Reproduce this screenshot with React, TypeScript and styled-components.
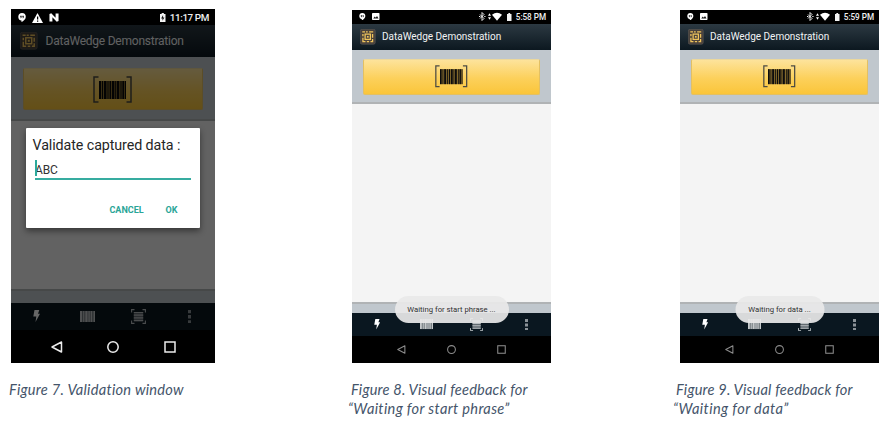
import React from "react";
import styled, { createGlobalStyle } from "styled-components";

const GlobalStyle = createGlobalStyle`
  * { box-sizing: border-box; }
  body { margin: 0; background: #fff; }
`;

type Size = "large" | "small";
interface Sized { $size: Size }
const pick = (large: string, small: string) => ({ $size }: Sized) => ($size === "large" ? large : small);

const Page = styled.main`
  display: flex;
  align-items: flex-start;
  width: 891px;
  height: 423px;
  overflow: hidden;
  padding-top: 9px;
  font-family: Roboto, sans-serif;
`;

const Figure = styled.figure<Sized>`
  margin: ${pick("0 137px 0 11px", "1px 129px 0 0")};
  width: ${pick("204px", "199px")};
  flex: none;
`;

const Phone = styled.div<Sized>`
  position: relative;
  display: flex;
  flex-direction: column;
  height: ${pick("354px", "353px")};
  background: #000;
`;

const StatusBar = styled.div<Sized>`
  display: flex;
  align-items: center;
  justify-content: space-between;
  flex: none;
  height: ${pick("16px", "13.5px")};
  padding: ${pick("1px 6px 0 7px", "0 5px 0 7px")};
  color: #fff;
  background: #000;
`;

const Group = styled.div<{ $gap: number }>`
  display: flex;
  align-items: center;
  gap: ${({ $gap }) => $gap}px;
  svg { display: block; flex: none; }
`;

const Clock = styled.span<Sized>`
  font-size: ${pick("9.9px", "8.2px")};
  font-weight: 500;
  letter-spacing: ${pick("-0.4px", "-0.05px")};
  line-height: 12px;
  white-space: nowrap;
  color: #f0f0f0;
`;

const Screen = styled.div`
  position: relative;
  display: flex;
  flex-direction: column;
  flex: 1;
  min-height: 0;
`;

const Header = styled.header<Sized>`
  display: flex;
  align-items: center;
  flex: none;
  gap: ${pick("8px", "6.5px")};
  height: ${pick("32px", "26.5px")};
  padding-left: ${pick("9px", "8px")};
  background: linear-gradient(#2c3942, #0c1820);
  svg { display: block; }
`;

const Title = styled.h1<Sized>`
  margin: 0;
  padding-top: ${pick("0", "1px")};
  font-size: ${pick("12px", "10px")};
  font-weight: 400;
  line-height: 16px;
  letter-spacing: ${pick("-0.23px", "-0.02px")};
  white-space: nowrap;
  color: #f1f3f4;
`;

const Panel = styled.section<Sized>`
  flex: none;
  height: ${pick("64px", "53.5px")};
  padding: ${pick("11px 12.5px 0 12px", "8.5px 11px 0")};
  background: #c0c7cd;
  border-bottom: 2px solid #b0b3b5;
`;

const ScanButton = styled.button<Sized>`
  display: flex;
  align-items: center;
  justify-content: center;
  width: 100%;
  height: ${pick("42px", "36px")};
  padding: 0;
  border: 1px solid #e3c063;
  border-top-color: #ecd89c;
  border-radius: 2px;
  background: linear-gradient(#fde39b, #fcd05a 55%, #fac53a);
`;

const Body = styled.div`
  flex: 1;
  background: #f4f4f4;
`;

const Strip = styled.div<Sized>`
  flex: none;
  height: ${pick("13.5px", "11.5px")};
  background: #c0c7cd;
  border-top: 2px solid #b0b3b5;
`;

const Toolbar = styled.div<Sized>`
  display: grid;
  grid-template-columns: repeat(4, 1fr);
  place-items: center;
  flex: none;
  height: ${pick("27.5px", "23px")};
  background: #0a1720;
  svg { display: block; }
`;

const NavBar = styled.nav<Sized>`
  display: grid;
  grid-template-columns: repeat(3, ${pick("56.5px", "49.75px")});
  justify-content: center;
  place-items: center;
  flex: none;
  height: ${pick("33px", "27px")};
  color: ${pick("#ececec", "#8c8c8c")};
  background: #000;
  svg { display: block; }
`;

const Scrim = styled.div`
  position: absolute;
  inset: 0;
  display: flex;
  justify-content: center;
  align-items: flex-start;
  padding-top: 103px;
  background: rgba(0, 0, 0, 0.6);
`;

const Dialog = styled.div`
  width: 174px;
  height: 100px;
  padding: 8px 9px 0 6.5px;
  border-radius: 1px;
  background: #fff;
  box-shadow: 0 3px 6px rgba(0, 0, 0, 0.45);
`;

const DialogTitle = styled.h2`
  margin: 0;
  font-size: 14.3px;
  font-weight: 400;
  line-height: 18px;
  letter-spacing: -0.1px;
  white-space: nowrap;
  color: #262626;
`;

const Field = styled.div`
  position: relative;
  height: 18px;
  margin: 8px 0 0 2.5px;
  border-bottom: 2px solid #36aca0;
  font-size: 12px;
  line-height: 16px;
  letter-spacing: -0.15px;
  color: #333;
`;

const Caret = styled.span`
  position: absolute;
  left: 0;
  top: -2.5px;
  width: 1.5px;
  height: 16px;
  background: #2ba99b;
`;

const Actions = styled.div`
  display: flex;
  justify-content: flex-end;
  gap: 22px;
  margin: 24px 13.5px 0 0;
  font-size: 9px;
  font-weight: 700;
  line-height: 12px;
  color: #2aa597;
`;

const Toast = styled.div<{ $width: number }>`
  position: absolute;
  left: 50%;
  bottom: 40px;
  transform: translateX(-50%);
  width: ${({ $width }) => $width}px;
  height: 27px;
  border-radius: 13.5px;
  background: rgba(232, 232, 232, 0.93);
  font-size: 7.7px;
  line-height: 28px;
  text-align: center;
  white-space: nowrap;
  color: #303030;
`;

const Caption = styled.figcaption<{ $shift: number }>`
  margin: 17px 0 0 ${({ $shift }) => $shift}px;
  font-family: Lato, sans-serif;
  font-size: 14.6px;
  font-style: italic;
  line-height: 19px;
  white-space: nowrap;
  color: #44546a;
`;

const CaptionLine = styled.span<{ $spacing: number; $indent?: number }>`
  display: block;
  margin-left: ${({ $indent = 0 }) => $indent}px;
  letter-spacing: ${({ $spacing }) => $spacing}px;
`;

const ChatIcon = ({ s }: { s: number }) => (
  <svg width={s} height={s * 1.15} viewBox="0 0 16 18.4">
    <path d="M8 0a7.6 7.6 0 0 0-1 15.1v3.2c4-2 8.6-5.800 8.600-10.700A7.600 7.600 0 0 0 8 0z" fill="#fff" />
    <path d="M4.400 5.500h3v3L6 10.300H4.900l.8-1.800H4.400zM8.700 5.500h3v3l-1.400 1.800H9.200l.8-1.800H8.700z" fill="#222" />
  </svg>
);
const WarningIcon = () => (
  <svg width="11" height="10" viewBox="0 0 22 20">
    <path d="M11 0 22 20H0z" fill="#fff" /><path d="M10 7h2.500v6H10zM10 14.800h2.500v2.500H10z" fill="#000" />
  </svg>
);
const NIcon = () => (
  <svg width="10" height="9" viewBox="0 0 22 18" preserveAspectRatio="none">
    <path d="M1 17V2l4-1.500 9.500 9V1H21v15l-4 1.500-9.500-9V17z" fill="#fff" />
  </svg>
);
const PictureIcon = () => (
  <svg width="7.500" height="7" viewBox="0 0 15 14">
    <rect width="15" height="14" rx="1.500" fill="#fff" /><path d="m2.500 11 3-4 2 2.500 2.500-3.500 3 5z" fill="#111" />
  </svg>
);
const BatteryIcon = ({ w, h, charging }: { w: number; h: number; charging?: boolean }) => (
  <svg width={w} height={h} viewBox="0 0 10 18" preserveAspectRatio="none">
    <path d="M3 0h4v2h3v16H0V2h3z" fill="#f4f4f4" />{charging && <path d="M5.600 4 2 11h2.500v4.500L8 8.800H5.600z" fill="#111" />}
  </svg>
);
const SignalIcons = () => (
  <svg width="24" height="9" viewBox="0 0 24 9">
    <path d="m1 2.500 4 4L3 8.500v-8l2 2-4 4" fill="none" stroke="#fff" strokeWidth=".9" />
    <path d="M0 3.900h1.300v1.200H0zM5.300 3.900h1.200v1.200H5.300zM9 3.700l1.500-2.400L12 3.700zM9 5.300h3l-1.500 2.400z" fill="#fff" />
    <path d="M13 2.800q5-4 10 0L18 8.700z" fill="#fff" />
  </svg>
);

const AppIcon = ({ s }: { s: number }) => (
  <svg width={s} height={s} viewBox="0 0 17 17">
    <rect x=".25" y=".25" width="16.500" height="16.500" rx="2" fill="#49413b" stroke="#6b6763" strokeWidth=".5" />
    <g fill="none" stroke="#efc45c" strokeWidth="1.400">
      <path d="M2.500 3.200h3M6.500 3.200h2M10 3.200h4.500M3.200 5.500v2.500M3.200 9.500v4.300H6M7.500 13.800h2.500M11.500 13.800h2.300V11M13.800 9.500V5.500" />
      <rect x="5.600" y="5.600" width="5.800" height="5.800" />
      <path d="M7.600 7.600h1.900v1.900H7.600z" fill="#efc45c" stroke="none" />
    </g>
  </svg>
);

const bars = [[0, 2], [3, 1], [5, 2.400], [8.500, 1], [10.600, 1.400], [13, 2.300], [16.200, 1], [18, 2.200], [21.500, 1], [23.400, 1.700], [26, 1]];
const BracketBarcode = ({ w, h }: { w: number; h: number }) => (
  <svg width={w} height={h} viewBox="0 0 39 27" preserveAspectRatio="none">
    <path d="M5.500 1H1v25h4.500M33.500 1H38v25h-4.500" fill="none" stroke="#4c4b43" strokeWidth="1.500" />
    <rect x="6" y="5" width="27" height="18" fill="#8f7330" />
    <g transform="translate(6 5)" fill="#0c0c0c">{bars.map(([x, bw]) => <rect key={x} x={x} width={bw} height="18" />)}</g>
  </svg>
);

const Bolt = ({ s }: { s: number }) => (
  <svg width={7 * s} height={12 * s} viewBox="0 0 7 12"><path d="M1.500 0h4.800L5 3.800h2L2.500 12l.8-5.400H.3z" fill="#fff" /></svg>
);
const Barcode = ({ s }: { s: number }) => (
  <svg width={15 * s} height={11.5 * s} viewBox="0 0 15 11.500">
    <rect width="15" height="11.500" fill="#747c81" />
    <path d="M0 0h2v11.500H0zM3.200 0h1v11.500h-1zM5.400 0h2v11.500h-2zM8.500 0h1.200v11.500H8.500zM10.800 0h1.300v11.500h-1.300zM13.600 0H15v11.500h-1.400z" fill="#c5c9cb" />
  </svg>
);
const ScanList = ({ s }: { s: number }) => (
  <svg width={15 * s} height={15 * s} viewBox="0 0 15 15">
    <path d="M.6 3.500V.6h2.900M11.500.6h2.900v2.900M14.400 11.500v2.900h-2.900M3.500 14.400H.6v-2.900" fill="none" stroke="#b9bec1" strokeWidth="1.100" />
    <rect x="2.800" y="3" width="9.400" height="9.200" fill="#626a70" />
    <path d="M2.800 3.500h9.400M2.800 6.200h9.400M2.800 8.900h9.400M2.800 11.600h9.400" stroke="#b9bec1" strokeWidth="1.200" />
  </svg>
);
const Dots = ({ s }: { s: number }) => (
  <svg width={3.500 * s} height={13.500 * s} viewBox="0 0 3.500 13.500">
    <path d="M0 0h3.500v3.300H0zM0 5.100h3.500v3.300H0zM0 10.200h3.500v3.300H0z" fill="#8b9297" />
  </svg>
);

const NavIcons = ({ large }: { large?: boolean }) => {
  const s = large ? 12 : 9;
  const stroke = large ? 1.5 : 1.4;
  const shared = { width: s, height: s, viewBox: "0 0 12 12", fill: "none", stroke: "currentColor", strokeWidth: stroke };
  return (
    <>
      <svg {...shared}><path d="M10.500 1v10L1 6z" strokeLinejoin="round" /></svg>
      <svg {...shared}><circle cx="6" cy="6" r="5.200" /></svg>
      <svg {...shared}><rect x="1" y="1" width="10" height="10" /></svg>
    </>
  );
};

interface DeviceProps { size: Size; time: string; toast?: string; toastWidth?: number; dialog?: boolean }

const Device = ({ size, time, toast, toastWidth = 0, dialog }: DeviceProps) => {
  const large = size === "large";
  const s = large ? 1 : 0.88;
  return (
    <Phone $size={size}>
      <StatusBar $size={size}>
        <Group $gap={large ? 6 : 6.5}>
          <ChatIcon s={large ? 8 : 6.5} />
          {large ? <><WarningIcon /><NIcon /></> : <PictureIcon />}
        </Group>
        <Group $gap={4}>
          {!large && <SignalIcons />}
          <BatteryIcon w={large ? 5.5 : 4.5} h={large ? 9 : 8} charging={large} />
          <Clock $size={size}>{time}</Clock>
        </Group>
      </StatusBar>
      <Screen>
        <Header $size={size}>
          <AppIcon s={large ? 17.5 : 15.5} />
          <Title $size={size}>DataWedge Demonstration</Title>
        </Header>
        <Panel $size={size}>
          <ScanButton $size={size} aria-label="Scan">
            <BracketBarcode w={large ? 39 : 32.5} h={large ? 27 : 22.5} />
          </ScanButton>
        </Panel>
        <Body />
        <Strip $size={size} />
        <Toolbar $size={size}>
          <Bolt s={s} /><Barcode s={s} /><ScanList s={s} /><Dots s={s} />
        </Toolbar>
        {dialog && (
          <Scrim>
            <Dialog>
              <DialogTitle>Validate captured data :</DialogTitle>
              <Field><Caret />ABC</Field>
              <Actions><span>CANCEL</span><span>OK</span></Actions>
            </Dialog>
          </Scrim>
        )}
      </Screen>
      <NavBar $size={size}><NavIcons large={large} /></NavBar>
      {toast && <Toast $width={toastWidth}>{toast}</Toast>}
    </Phone>
  );
};

export default function App() {
  return (
    <>
      <GlobalStyle />
      <Page>
        <Figure $size="large">
          <Device size="large" time="11:17 PM" dialog />
          <Caption $shift={-2}><CaptionLine $spacing={0.27}>Figure 7. Validation window</CaptionLine></Caption>
        </Figure>
        <Figure $size="small">
          <Device size="small" time="5:58 PM" toast="Waiting for start phrase ..." toastWidth={114} />
          <Caption $shift={-1}>
            <CaptionLine $spacing={0.19}>Figure 8. Visual feedback for</CaptionLine>
            <CaptionLine $spacing={0.34} $indent={-3}>“Waiting for start phrase”</CaptionLine>
          </Caption>
        </Figure>
        <Figure $size="small">
          <Device size="small" time="5:59 PM" toast="Waiting for data ..." toastWidth={89} />
          <Caption $shift={-4}>
            <CaptionLine $spacing={0.19}>Figure 9. Visual feedback for</CaptionLine>
            <CaptionLine $spacing={0.4} $indent={-3}>“Waiting for data”</CaptionLine>
          </Caption>
        </Figure>
      </Page>
    </>
  );
}
